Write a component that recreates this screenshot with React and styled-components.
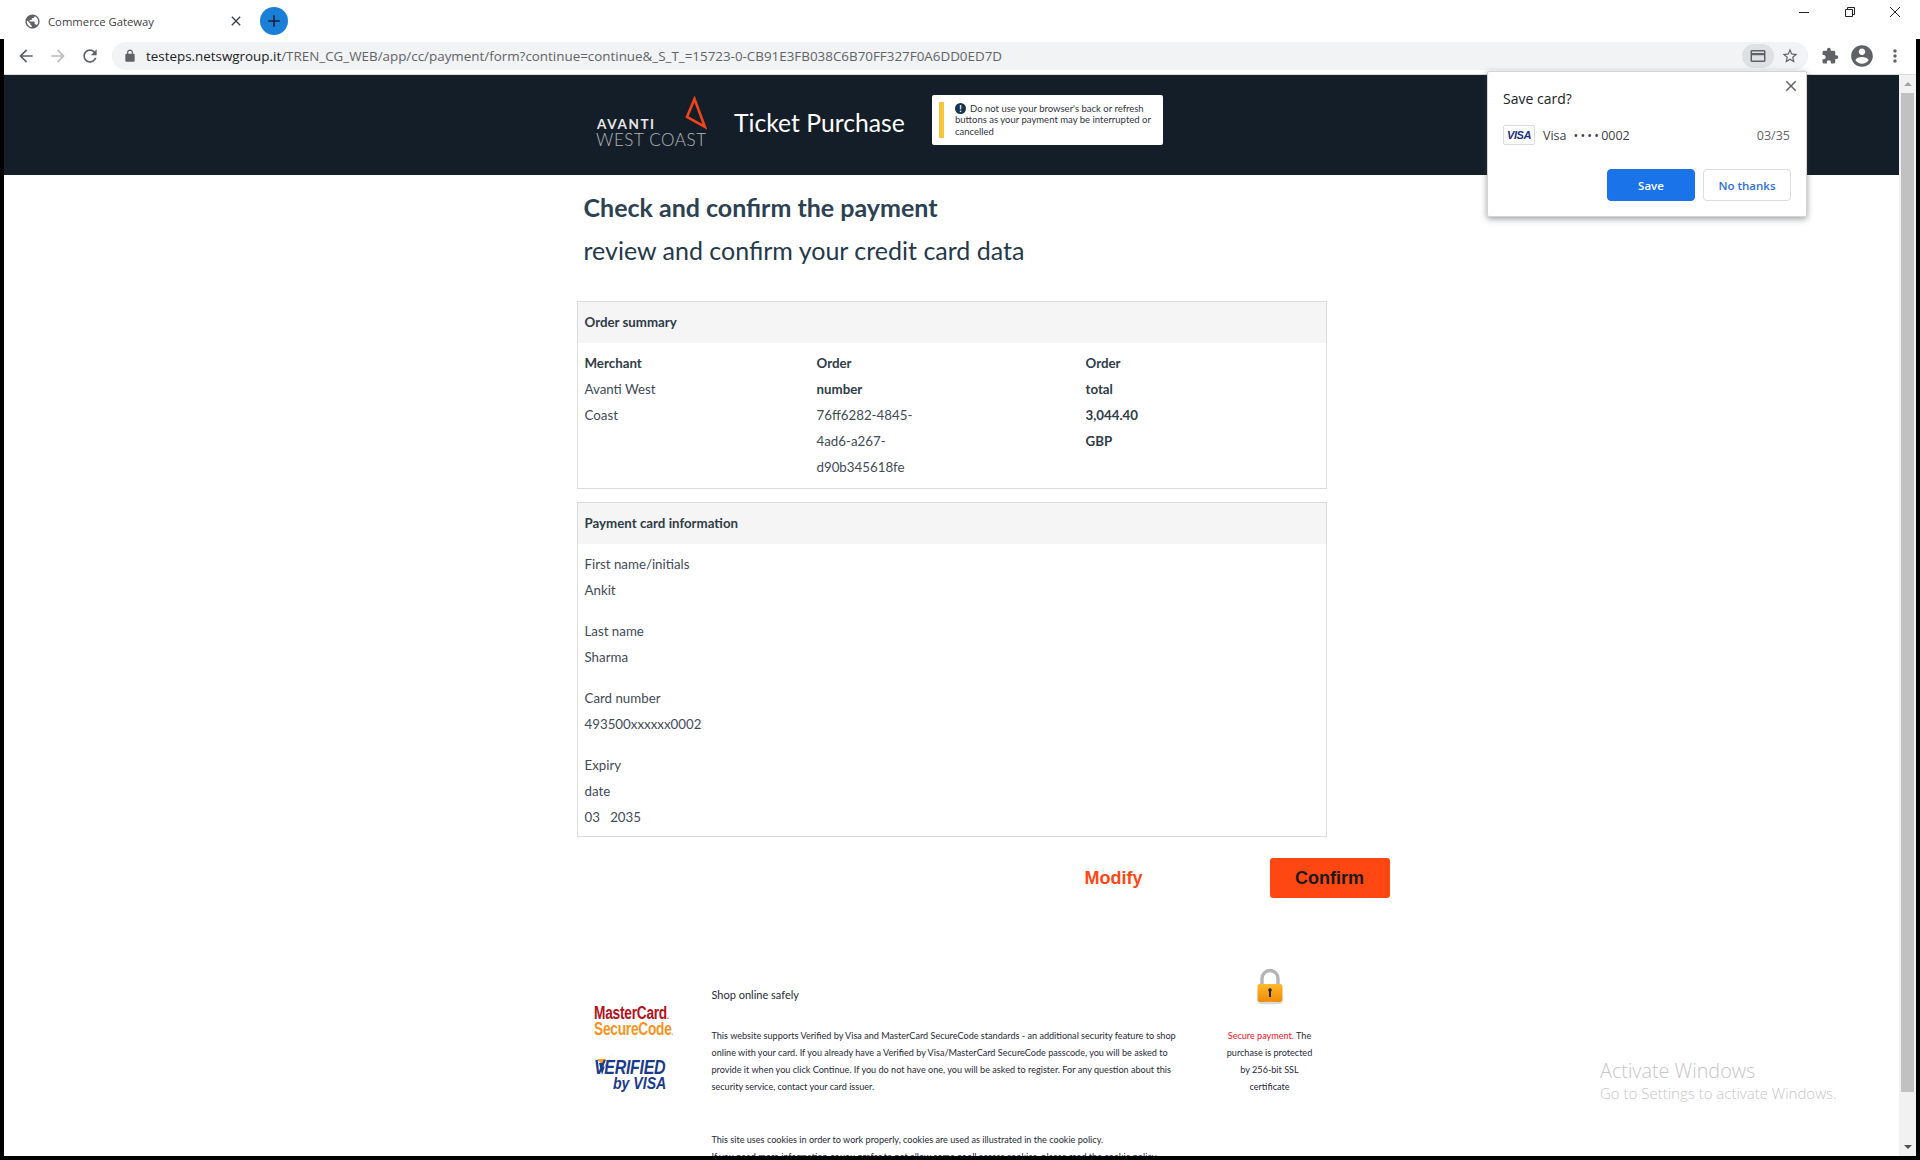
import React from 'react';
import styled, { createGlobalStyle } from 'styled-components';

const Global = createGlobalStyle`
	html, body {
		margin: 0;
		padding: 0;
		background: #fff;
		overflow: hidden;
	}
	* {
		box-sizing: border-box;
	}
`;

const paths = {
	globe: 'M12 2C6.48 2 2 6.48 2 12s4.48 10 10 10 10-4.48 10-10S17.52 2 12 2zm-1 17.93c-3.95-.49-7-3.85-7-7.93 0-.62.08-1.21.21-1.79L9 15v1c0 1.1.9 2 2 2v1.93zm6.9-2.54c-.26-.81-1-1.39-1.9-1.39h-1v-3c0-.55-.45-1-1-1H8v-2h2c.55 0 1-.45 1-1V7h2c1.1 0 2-.9 2-2v-.41c2.93 1.19 5 4.06 5 7.41 0 2.08-.8 3.97-2.1 5.39z',
	close: 'M19 6.41 17.59 5 12 10.59 6.41 5 5 6.41 10.59 12 5 17.59 6.41 19 12 13.41 17.59 19 19 17.59 13.41 12z',
	plus: 'M19 13h-6v6h-2v-6H5v-2h6V5h2v6h6v2z',
	back: 'M20 11H7.83l5.59-5.59L12 4l-8 8 8 8 1.41-1.41L7.83 13H20v-2z',
	forward: 'M12 4l-1.41 1.41L16.17 11H4v2h12.17l-5.58 5.59L12 20l8-8z',
	reload: 'M17.65 6.35C16.2 4.9 14.21 4 12 4c-4.42 0-7.99 3.58-7.99 8s3.57 8 7.99 8c3.73 0 6.84-2.55 7.73-6h-2.08c-.82 2.33-3.04 4-5.65 4-3.31 0-6-2.69-6-6s2.69-6 6-6c1.66 0 3.14.69 4.22 1.78L13 11h7V4l-2.35 2.35z',
	lock: 'M18 8h-1V6c0-2.76-2.24-5-5-5S7 3.24 7 6v2H6c-1.1 0-2 .9-2 2v10c0 1.1.9 2 2 2h12c1.1 0 2-.9 2-2V10c0-1.1-.9-2-2-2zM9 6c0-1.66 1.34-3 3-3s3 1.34 3 3v2H9V6z',
	card: 'M20 4H4c-1.1 0-2 .9-2 2v12c0 1.1.9 2 2 2h16c1.1 0 2-.9 2-2V6c0-1.1-.9-2-2-2zm0 14H4v-7h16v7zm0-10H4V6h16v2z',
	star: 'M22 9.24l-7.19-.62L12 2 9.19 8.63 2 9.24l5.46 4.73L5.82 21 12 17.27 18.18 21l-1.63-7.03L22 9.24zM12 15.4l-3.76 2.27 1-4.28-3.32-2.88 4.38-.38L12 6.1l1.71 4.04 4.38.38-3.32 2.88 1 4.28L12 15.4z',
	puzzle: 'M20.5 11H19V7c0-1.1-.9-2-2-2h-4V3.5C13 2.12 11.88 1 10.5 1S8 2.12 8 3.5V5H4c-1.1 0-1.99.9-1.99 2v3.8H3.5c1.49 0 2.7 1.21 2.7 2.7s-1.21 2.7-2.7 2.7H2V20c0 1.1.9 2 2 2h3.8v-1.5c0-1.49 1.21-2.7 2.7-2.7 1.49 0 2.7 1.21 2.7 2.7V22H17c1.1 0 2-.9 2-2v-4h1.5c1.38 0 2.5-1.12 2.5-2.5S21.88 11 20.5 11z',
	account: 'M12 2C6.48 2 2 6.48 2 12s4.48 10 10 10 10-4.48 10-10S17.52 2 12 2zm0 3c1.66 0 3 1.34 3 3s-1.34 3-3 3-3-1.34-3-3 1.34-3 3-3zm0 14.2c-2.5 0-4.71-1.28-6-3.22.03-1.99 4-3.08 6-3.08 1.99 0 5.97 1.09 6 3.08-1.29 1.94-3.5 3.22-6 3.22z',
	dots: 'M12 8c1.1 0 2-.9 2-2s-.9-2-2-2-2 .9-2 2 .9 2 2 2zm0 2c-1.1 0-2 .9-2 2s.9 2 2 2 2-.9 2-2-.9-2-2-2zm0 6c-1.1 0-2 .9-2 2s.9 2 2 2 2-.9 2-2-.9-2-2-2z',
};

const Icon = ({ name, size = 18, color = '#5f6368' }) => (
	<svg width={size} height={size} viewBox="0 0 24 24" fill={color} aria-hidden="true">
		<path d={paths[name]} />
	</svg>
);

const WindowIcon = ({ kind }) => (
	<svg width="12" height="12" viewBox="0 0 12 12" fill="none" stroke="#222" strokeWidth="1">
		{kind === 'min' && <path d="M1 6.5h10" />}
		{kind === 'restore' && <path d="M1.5 3.5h7v7h-7zM3.5 3.5v-2h7v7h-2" />}
		{kind === 'close' && <path d="M1 1l10 10M11 1L1 11" />}
	</svg>
);

const orderColumns = [
	{ width: 232, max: 84, head: 'Merchant', value: 'Avanti West Coast' },
	{ width: 269, max: 100, head: 'Order number', value: '76ff6282-4845-4ad6-a267-d90b345618fe' },
	{ width: 200, max: 54, head: 'Order total', value: '3,044.40 GBP', strong: true },
];

const cardFields = [
	{ label: 'First name/initials', value: 'Ankit' },
	{ label: 'Last name', value: 'Sharma' },
	{ label: 'Card number', value: '493500xxxxxx0002' },
	{ label: 'Expiry date', value: '03\u00a0\u00a0\u00a02035', narrow: true },
];

const App = () => {
	return (
		<Screen>
			<Global />
			<TitleBar>
				<Tab>
					<Icon name="globe" size={17} />
					<TabTitle>Commerce Gateway</TabTitle>
					<TabClose>
						<Icon name="close" size={16} color="#3c4043" />
					</TabClose>
				</Tab>
				<NewTab>
					<Icon name="plus" size={20} color="#11233a" />
				</NewTab>
				<WindowControls>
					<WindowBtn><WindowIcon kind="min" /></WindowBtn>
					<WindowBtn><WindowIcon kind="restore" /></WindowBtn>
					<WindowBtn><WindowIcon kind="close" /></WindowBtn>
				</WindowControls>
			</TitleBar>

			<Frame>
				<Toolbar>
					<ToolBtn><Icon name="back" size={20} /></ToolBtn>
					<ToolBtn><Icon name="forward" size={20} color="#babcbe" /></ToolBtn>
					<ToolBtn><Icon name="reload" size={20} /></ToolBtn>
					<Omnibox>
						<Icon name="lock" size={14} />
						<Url>
							<b>testeps.netswgroup.it</b>/TREN_CG_WEB/app/cc/payment/form?continue=continue&amp;_S_T_=15723-0-CB91E3FB038C6B70FF327F0A6DD0ED7D
						</Url>
						<CardChip><Icon name="card" size={18} /></CardChip>
						<ToolBtn><Icon name="star" size={18} /></ToolBtn>
					</Omnibox>
					<ToolBtn><Icon name="puzzle" size={18} /></ToolBtn>
					<ToolBtn><Icon name="account" size={26} /></ToolBtn>
					<ToolBtn $wide><Icon name="dots" size={20} /></ToolBtn>
				</Toolbar>

				<Viewport>
					<Content>
						<Banner>
							<Logo>
								<Avanti>AVANTI</Avanti>
								<WestCoast>WEST COAST</WestCoast>
								<LogoMark width="22" height="34" viewBox="0 0 22 34" fill="none">
									<path d="M9.500 3 2 21l18 10z" stroke="#f0441c" strokeWidth="2.600" />
								</LogoMark>
							</Logo>
							<BannerTitle>Ticket Purchase</BannerTitle>
							<Notice>
								<NoticeBar />
								<NoticeText>
									<NoticeMark>!</NoticeMark>
									Do not use your browser's back or refresh buttons as your payment may be interrupted or cancelled
								</NoticeText>
							</Notice>
						</Banner>

						<Column>
							<Heading>Check and confirm the payment</Heading>
							<SubHeading>review and confirm your credit card data</SubHeading>

							<Panel>
								<PanelHead>Order summary</PanelHead>
								<OrderBody>
									{orderColumns.map((col) => (
										<OrderCol key={col.head} $width={col.width}>
											<Wrapped $max={60}>
												<Strong>{col.head}</Strong>
											</Wrapped>
											<Wrapped $max={col.max}>
												{col.strong ? <Strong>{col.value}</Strong> : col.value}
											</Wrapped>
										</OrderCol>
									))}
								</OrderBody>
							</Panel>

							<Panel $gap>
								<PanelHead>Payment card information</PanelHead>
								<CardBody>
									{cardFields.map((field) => (
										<div key={field.label}>
											<Wrapped $max={field.narrow ? 60 : 300}>{field.label}</Wrapped>
											<div>{field.value}</div>
										</div>
									))}
								</CardBody>
							</Panel>

							<Actions>
								<ModifyBtn>Modify</ModifyBtn>
								<ConfirmBtn>Confirm</ConfirmBtn>
							</Actions>

							<Footer>
								<Brands>
									<McLogo>
										<McTop>MasterCard<small>.</small></McTop>
										<McBottom>SecureCode<small>.</small></McBottom>
									</McLogo>
									<VisaLogo>
										<VisaCheck width="22" height="22" viewBox="0 0 22 22">
											<path d="M3 5h9l-3 7z" fill="#f7a11a" />
											<path d="M20 0C14 6 10 13 8 21L5 9h4l1 5C12 9 16 4 20 0z" fill="#1a3a8c" />
										</VisaCheck>
										<VisaTop>VERIFIED</VisaTop>
										<VisaBottom>by VISA</VisaBottom>
									</VisaLogo>
								</Brands>

								<Legal>
									<LegalTitle>Shop online safely</LegalTitle>
									<LegalBlock>
										This website supports Verified by Visa and MasterCard SecureCode standards - an additional security feature to shop online with your card. If you already have a Verified by Visa/MasterCard SecureCode passcode, you will be asked to provide it when you click Continue. If you do not have one, you will be asked to register. For any question about this security service, contact your card issuer.
									</LegalBlock>
									<CookieNote>
										This site uses cookies in order to work properly, cookies are used as illustrated in the cookie policy.
										<br />
										If you need more information or you prefer to not allow some or all access cookies, please read the cookie policy
									</CookieNote>
								</Legal>

								<Secure>
									<svg width="30" height="36" viewBox="0 0 30 36">
										<defs>
											<linearGradient id="lockBody" x1="0" y1="0" x2="0" y2="1">
												<stop offset="0" stopColor="#fdb92c" />
												<stop offset="1" stopColor="#ef8a06" />
											</linearGradient>
										</defs>
										<path d="M7 16V9.500a8 8 0 0 1 16 0V16" fill="none" stroke="#b4b4b4" strokeWidth="3.400" />
										<rect x="2.500" y="15" width="25" height="18" rx="2.500" fill="url(#lockBody)" />
										<ellipse cx="15" cy="34" rx="13" ry="1.300" fill="#d8d8d8" />
										<circle cx="15" cy="21" r="1.800" fill="#222" />
										<rect x="14" y="21" width="2" height="7" fill="#222" />
									</svg>
									<SecureText>
										<SecureRed>Secure payment.</SecureRed> The purchase is protected by 256-bit SSL certificate
									</SecureText>
								</Secure>
							</Footer>
						</Column>
					</Content>

					<ScrollTrack>
						<ScrollArrow $up />
						<ScrollThumb />
						<ScrollArrow />
					</ScrollTrack>

					<Watermark>
						<WatermarkTitle>Activate Windows</WatermarkTitle>
						<WatermarkText>Go to Settings to activate Windows.</WatermarkText>
					</Watermark>
				</Viewport>

				<SavePopup>
					<PopupClose><Icon name="close" size={18} /></PopupClose>
					<PopupTitle>Save card?</PopupTitle>
					<PopupCard>
						<VisaBadge>VISA</VisaBadge>
						<span>Visa</span>
						<CardDots>••••</CardDots>
						<span>0002</span>
						<CardExpiry>03/35</CardExpiry>
					</PopupCard>
					<PopupActions>
						<PopupBtn $primary>Save</PopupBtn>
						<PopupBtn>No thanks</PopupBtn>
					</PopupActions>
				</SavePopup>
			</Frame>
		</Screen>
	);
};

const chrome = `"Open Sans", "Liberation Sans", sans-serif`;
const site = `Lato, "Open Sans", sans-serif`;

const Screen = styled.div`
	display: flex;
	flex-direction: column;
	width: 1920px;
	height: 1160px;
	overflow: hidden;
	background: #fff;
	font-family: ${site};
`;

const TitleBar = styled.div`
	display: flex;
	align-items: center;
	height: 39px;
	flex-shrink: 0;
	padding: 3px 2px 0 0;
`;

const Tab = styled.div`
	display: flex;
	align-items: center;
	width: 260px;
	padding-left: 24px;
`;

const TabTitle = styled.span`
	margin-left: 7px;
	font: 11.3px ${chrome};
	color: #3c4043;
`;

const TabClose = styled.span`
	display: flex;
	margin-left: auto;
	margin-right: 16px;
`;

const NewTab = styled.div`
	display: flex;
	align-items: center;
	justify-content: center;
	width: 28px;
	height: 28px;
	border-radius: 50%;
	background: #1a7fd6;
`;

const WindowControls = styled.div`
	display: flex;
	align-self: flex-start;
	margin-left: auto;
	padding-top: 3px;
`;

const WindowBtn = styled.div`
	display: flex;
	justify-content: center;
	width: 45.5px;
`;

const Frame = styled.div`
	position: relative;
	display: flex;
	flex-direction: column;
	flex: 1;
	min-height: 0;
	border: solid #000;
	border-width: 0 4px 4px;
`;

const Toolbar = styled.div`
	display: flex;
	align-items: center;
	height: 36px;
	flex-shrink: 0;
	padding: 0 4px 2px 6px;
	border-bottom: 1px solid #dadce0;
`;

const ToolBtn = styled.div`
	display: flex;
	align-items: center;
	justify-content: center;
	width: ${(p) => (p.$wide ? 34 : 32)}px;
	height: 28px;
	flex-shrink: 0;
`;

const Omnibox = styled.div`
	display: flex;
	align-items: center;
	flex: 1;
	height: 28px;
	min-width: 0;
	margin: 0 6px;
	padding-left: 11px;
	padding-right: 2px;
	border-radius: 14px;
	background: #f1f3f4;
`;

const Url = styled.div`
	flex: 1;
	margin-left: 9px;
	font: 13.4px ${chrome};
	color: #5f6368;
	white-space: nowrap;

	b {
		font-weight: 400;
		color: #202124;
	}
`;

const CardChip = styled.div`
	display: flex;
	align-items: center;
	justify-content: center;
	width: 32px;
	height: 24px;
	border-radius: 12px;
	background: #dee1e3;
`;

const Viewport = styled.div`
	position: relative;
	display: flex;
	flex: 1;
	min-height: 0;
`;

const Content = styled.div`
	flex: 1;
	min-width: 0;
	overflow: hidden;
`;

const Banner = styled.div`
	display: flex;
	align-items: center;
	height: 100px;
	padding: 0 0 10px 592px;
	background: #141e28;
`;

const Logo = styled.div`
	position: relative;
	width: 111px;
	margin-top: 24px;
	margin-right: 27px;
`;

const Avanti = styled.div`
	padding-left: 1px;
	font-size: 13.5px;
	font-weight: 700;
	line-height: 16px;
	letter-spacing: 1.6px;
	color: #e8e8e8;
`;

const WestCoast = styled.div`
	font-size: 17px;
	font-weight: 300;
	line-height: 16px;
	letter-spacing: 0.6px;
	color: #b4b8bc;
	white-space: nowrap;
`;

const LogoMark = styled.svg`
	position: absolute;
	top: -20px;
	right: 0;
`;

const BannerTitle = styled.div`
	width: 198px;
	margin-top: 4px;
	font-size: 24.7px;
	color: #fff;
	white-space: nowrap;
`;

const Notice = styled.div`
	display: flex;
	align-items: center;
	width: 231px;
	height: 50px;
	padding: 0 6px 0 7px;
	border-radius: 2px;
	background: #fff;
`;

const NoticeBar = styled.div`
	flex-shrink: 0;
	width: 5px;
	height: 36px;
	background: #f5c63c;
`;

const NoticeText = styled.div`
	margin-left: 11px;
	font-size: 9.5px;
	line-height: 11.5px;
	color: #30343a;
`;

const NoticeMark = styled.span`
	display: inline-block;
	width: 11px;
	height: 11px;
	margin: 0 4px 0 0;
	border-radius: 50%;
	background: #14364f;
	color: #fff;
	font-size: 9px;
	font-weight: 700;
	line-height: 11px;
	text-align: center;
`;

const Column = styled.div`
	width: 750px;
	margin: 0 auto;
	padding-top: 15px;
	font-size: 13.3px;
	line-height: 26px;
	color: #3f4b57;
`;

const Heading = styled.h1`
	margin: 0;
	padding-left: 7px;
	font-size: 25px;
	font-weight: 700;
	line-height: 34px;
	color: #2c4152;
`;

const SubHeading = styled.h2`
	margin: 9px 0 34px;
	padding-left: 7px;
	font-size: 25px;
	font-weight: 400;
	line-height: 34px;
	color: #24394a;
`;

const Panel = styled.section`
	margin-top: ${(p) => (p.$gap ? 13 : 0)}px;
	border: 1px solid #dcdcdc;
`;

const PanelHead = styled.div`
	height: 41px;
	padding-left: 7px;
	background: #f5f5f5;
	font-weight: 700;
	line-height: 41px;
	color: #2f3b47;
`;

const OrderBody = styled.div`
	display: flex;
	padding: 7px 7px 8px;
`;

const OrderCol = styled.div`
	flex: 0 0 ${(p) => p.$width}px;
`;

const Wrapped = styled.div`
	max-width: ${(p) => p.$max}px;
`;

const Strong = styled.strong`
	font-weight: 700;
	color: #2f3b47;
`;

const CardBody = styled.div`
	display: flex;
	flex-direction: column;
	gap: 15px;
	padding: 7px 7px 6px;
`;

const Actions = styled.div`
	display: flex;
	justify-content: flex-end;
	align-items: center;
	gap: 127px;
	height: 40px;
	margin: 21px -63px 0 0;
	font: 700 18px "Liberation Sans", Arial, sans-serif;
`;

const ModifyBtn = styled.a`
	color: #ff4713;
`;

const ConfirmBtn = styled.button`
	width: 120px;
	height: 40px;
	border: none;
	border-radius: 3px;
	background: #ff4713;
	color: #1a1a1a;
	font: inherit;
`;

const Footer = styled.div`
	display: flex;
	align-items: flex-start;
	margin-top: 90px;
	padding-left: 17px;
`;

const Brands = styled.div`
	display: flex;
	flex-direction: column;
	gap: 15px;
	width: 118px;
	padding-top: 18px;
`;

const McLogo = styled.div`
	font-family: "Liberation Sans", Arial, sans-serif;
	font-size: 18px;
	font-weight: 700;
	line-height: 14px;
	letter-spacing: -0.3px;
	white-space: nowrap;
	transform: scaleX(0.76);
	transform-origin: left;

	small {
		font-size: 9px;
	}
`;

const McTop = styled.div`
	color: #b5121b;
`;

const McBottom = styled.div`
	margin-top: -1px;
	color: #f7941d;
`;

const VisaLogo = styled.div`
	position: relative;
	width: 76px;
	font-family: "Liberation Sans", Arial, sans-serif;
	font-weight: 700;
	font-style: italic;
	color: #1a3a8c;
`;

const VisaCheck = styled.svg`
	position: absolute;
	top: 0;
	left: 0;
`;

const VisaTop = styled.div`
	position: relative;
	padding-top: 5px;
	font-size: 20px;
	line-height: 17px;
	letter-spacing: -0.4px;
	white-space: nowrap;
	transform: scaleX(0.8);
	transform-origin: left;
`;

const VisaBottom = styled.div`
	margin-left: 19px;
	font-size: 16px;
	line-height: 16px;
	white-space: nowrap;
	transform: scaleX(0.88);
	transform-origin: left;
`;

const Legal = styled.div`
	width: 470px;
	font-size: 9.1px;
	line-height: 17px;
	color: #1f2a35;
`;

const LegalTitle = styled.div`
	margin-bottom: 26px;
	font-size: 11px;
	line-height: 13px;
`;

const LegalBlock = styled.p`
	margin: 0;
`;

const CookieNote = styled.p`
	margin: 36px 0 0;
	white-space: nowrap;
`;

const Secure = styled.div`
	display: flex;
	flex-direction: column;
	align-items: center;
	width: 90px;
	margin: -19px 0 0 43px;
`;

const SecureText = styled.div`
	margin-top: 22px;
	font-size: 9.1px;
	line-height: 17px;
	text-align: center;
	color: #1f2a35;
`;

const SecureRed = styled.span`
	color: #f0141e;
`;

const ScrollTrack = styled.div`
	display: flex;
	flex-direction: column;
	align-items: center;
	flex: 0 0 17px;
	background: #f1f1f1;
`;

const ScrollArrow = styled.div`
	flex-shrink: 0;
	width: 0;
	height: 0;
	margin: 7px 0;
	border-left: 4px solid transparent;
	border-right: 4px solid transparent;
	${(p) => (p.$up ? 'border-bottom: 4px solid #a3a3a3;' : 'border-top: 4px solid #505050;')}
`;

const ScrollThumb = styled.div`
	width: 13px;
	flex: 1;
	margin-bottom: 46px;
	background: #c1c1c1;
`;

const Watermark = styled.div`
	position: absolute;
	left: 1596px;
	bottom: 53px;
	white-space: nowrap;
	font-family: "Open Sans", sans-serif;
	font-weight: 300;
	color: #c6c6c6;
`;

const WatermarkTitle = styled.div`
	font-size: 19.8px;
	line-height: 24px;
`;

const WatermarkText = styled.div`
	font-size: 15px;
	line-height: 20px;
`;

const SavePopup = styled.div`
	position: absolute;
	top: 32px;
	right: 109px;
	width: 320px;
	height: 146px;
	padding: 17px 15px 0 15px;
	background: #fff;
	border: 1px solid #d4d4d4;
	border-radius: 2px;
	box-shadow: 0 2px 6px rgba(60, 64, 67, 0.5);
	font-family: ${chrome};
	color: #202124;
`;

const PopupClose = styled.div`
	position: absolute;
	top: 5px;
	right: 6px;
	display: flex;
`;

const PopupTitle = styled.div`
	margin-bottom: 16px;
	font-size: 14px;
	line-height: 20px;
`;

const PopupCard = styled.div`
	display: flex;
	align-items: center;
	height: 20px;
	font-size: 12.5px;
	color: #3c4043;
`;

const VisaBadge = styled.div`
	width: 32px;
	height: 20px;
	margin-right: 8px;
	border: 1px solid #dadce0;
	border-radius: 2px;
	font: italic 700 11px/18px "Liberation Sans", sans-serif;
	letter-spacing: -0.4px;
	text-align: center;
	color: #1a2e7c;
`;

const CardDots = styled.span`
	margin-left: 7px;
	letter-spacing: 2.2px;
`;

const CardExpiry = styled.span`
	margin-left: auto;
	margin-right: 1px;
	color: #5f6368;
`;

const PopupActions = styled.div`
	display: flex;
	justify-content: flex-end;
	gap: 8px;
	margin-top: 24px;
`;

const PopupBtn = styled.button`
	width: 88px;
	height: 32px;
	padding: 0;
	border: 1px solid ${(p) => (p.$primary ? '#1a73e8' : '#dadce0')};
	border-radius: 4px;
	background: ${(p) => (p.$primary ? '#1a73e8' : '#fff')};
	color: ${(p) => (p.$primary ? '#fff' : '#2f6fe0')};
	font: 600 11.5px ${chrome};
`;

export default App;
